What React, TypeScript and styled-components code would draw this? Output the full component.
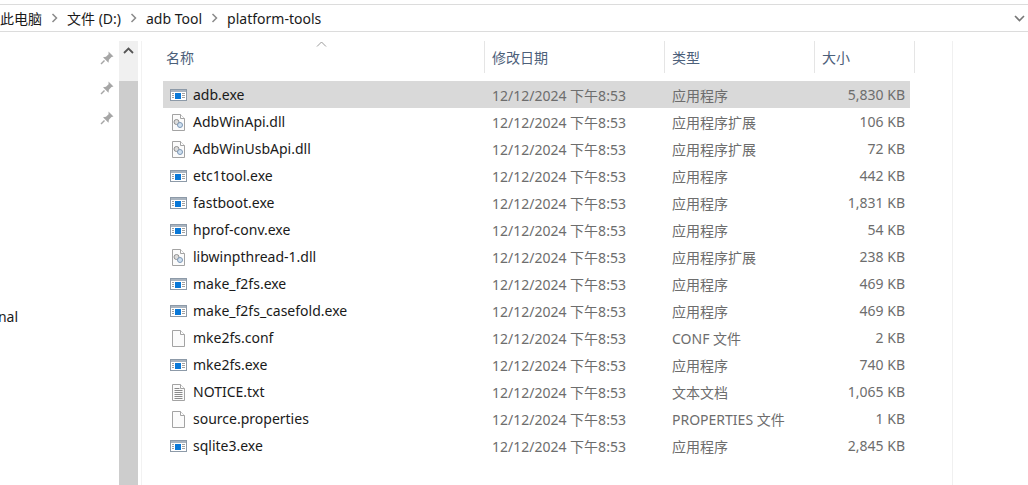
import React, { FC } from "react";
import styled, { createGlobalStyle } from "styled-components";

const GlobalStyle = createGlobalStyle`
  html, body {
    margin: 0;
    padding: 0;
    background: #fff;
    overflow: hidden;
  }
  body {
    font-family: "Noto Sans", "Noto Sans CJK SC", sans-serif;
  }
`;

const Window = styled.div`
  width: 1028px;
  height: 485px;
  display: flex;
  flex-direction: column;
  overflow: hidden;
  background: #fff;
`;

const AddressBar = styled.div`
  height: 26px;
  margin-top: 4px;
  flex: none;
  display: flex;
  align-items: center;
  border-top: 1px solid #dcdcdc;
  border-bottom: 1px solid #dcdcdc;
  font-size: 14px;
  color: #1a1a1a;
`;

const Crumb = styled.span`
  white-space: nowrap;
`;

const CrumbArrow = styled.svg`
  width: 7px;
  height: 10px;
  margin: 0 9px 0 9px;
  flex: none;
`;

const BarChevron = styled.svg`
  width: 11px;
  height: 7px;
  margin-left: auto;
  margin-right: 3px;
`;

const Body = styled.div`
  flex: 1;
  display: flex;
  min-height: 0;
  padding-top: 9px;
`;

const QuickAccess = styled.div`
  width: 119px;
  flex: none;
  position: relative;
  display: flex;
  flex-direction: column;
  align-items: flex-end;
  gap: 14px;
  padding: 9px 4px 0 0;
  box-sizing: border-box;
`;

const PinIcon = styled.svg`
  width: 16px;
  height: 16px;
`;

const CutOffLabel = styled.span`
  position: absolute;
  left: -10px;
  top: 266px;
  font-size: 14px;
  color: #1a1a1a;
  width: 28px;
  text-align: right;
  white-space: nowrap;
`;

const ScrollBar = styled.div`
  width: 19px;
  flex: none;
  display: flex;
  flex-direction: column;
  background: #f0f0f0;
`;

const ScrollUp = styled.div`
  height: 40px;
  display: flex;
  justify-content: center;
  padding-top: 6px;
  box-sizing: border-box;
`;

const ScrollThumb = styled.div`
  flex: 1;
  background: #cdcdcd;
`;

const Pane = styled.div`
  width: 812px;
  flex: none;
  margin-left: 3px;
  padding-left: 21px;
  box-sizing: border-box;
  border-left: 1px solid #f2f2f2;
  border-right: 1px solid #f0f0f0;
  display: flex;
  flex-direction: column;
  position: relative;
`;

const SortCaret = styled.svg`
  position: absolute;
  left: 174px;
  top: 0;
  width: 11px;
  height: 6px;
`;

const HeaderRow = styled.div`
  height: 32px;
  display: grid;
  grid-template-columns: 322px 180px 150px 100px;
  align-items: center;
  margin-bottom: 8px;
`;

const HeaderCell = styled.div`
  height: 100%;
  display: flex;
  align-items: center;
  padding-left: 7px;
  box-sizing: border-box;
  border-right: 1px solid #e5e5e5;
  font-size: 14px;
  color: #4c607a;
  &:first-child {
    padding-left: 3px;
  }
`;

const Rows = styled.div`
  display: flex;
  flex-direction: column;
  width: 747px;
`;

const Row = styled.div<{ $selected?: boolean }>`
  height: 27px;
  display: grid;
  grid-template-columns: 322px 180px 150px 95px;
  align-items: center;
  background: ${(p) => (p.$selected ? "#d9d9d9" : "transparent")};
  font-size: 14px;
  white-space: nowrap;
`;

const NameCell = styled.div`
  display: flex;
  align-items: center;
  gap: 5px;
  padding-left: 6px;
  color: #1a1a1a;
`;

const FileIconBox = styled.svg`
  width: 19px;
  height: 18px;
  flex: none;
`;

const DetailCell = styled.div`
  padding-left: 7px;
  color: #6d6d6d;
`;

const SizeCell = styled.div`
  text-align: right;
  padding-right: 5px;
  color: #6d6d6d;
`;

type Kind = "exe" | "dll" | "blank" | "txt";

const FileIcon: FC<{ kind: Kind }> = ({ kind }) => {
  if (kind === "exe") {
    return (
      <FileIconBox viewBox="0 0 19 18">
        <rect x="1.5" y="3.5" width="16" height="11" fill="#fff" stroke="#8d9aa8" />
        <rect x="2" y="4" width="15" height="2" fill="#aab4bf" />
        <rect x="3" y="7" width="2" height="1" fill="#a0a0a0" />
        <rect x="3" y="9" width="2" height="1" fill="#a0a0a0" />
        <rect x="3" y="11" width="2" height="1" fill="#a0a0a0" />
        <rect x="6" y="7" width="6" height="6" fill="#0a78d7" />
        <rect x="13" y="7" width="3" height="1" fill="#a0a0a0" />
        <rect x="13" y="9" width="3" height="1" fill="#a0a0a0" />
        <rect x="13" y="11" width="3" height="1" fill="#a0a0a0" />
      </FileIconBox>
    );
  }
  return (
    <FileIconBox viewBox="0 0 19 18">
      <path d="M3.5 1.5h8l4 4v12h-12z" fill="#fbfbfb" stroke="#a3a3a3" />
      <path d="M11.5 1.5v4h4" fill="#fff" stroke="#a3a3a3" />
      {kind === "txt" && (
        <path d="M5.5 5.5h5M5.5 7.5h8M5.5 9.5h8M5.5 11.5h8M5.5 13.5h8M5.5 15.5h8" stroke="#8a8a8a" />
      )}
      {kind === "dll" && (
        <>
          <circle cx="7.5" cy="9" r="2.5" fill="#ddd" stroke="#909090" />
          <circle cx="11" cy="12" r="2.5" fill="#cfe0f0" stroke="#7d97b5" />
        </>
      )}
    </FileIconBox>
  );
};

const files: { name: string; kind: Kind; type: string; size: string }[] = [
  { name: "adb.exe", kind: "exe", type: "应用程序", size: "5,830 KB" },
  { name: "AdbWinApi.dll", kind: "dll", type: "应用程序扩展", size: "106 KB" },
  { name: "AdbWinUsbApi.dll", kind: "dll", type: "应用程序扩展", size: "72 KB" },
  { name: "etc1tool.exe", kind: "exe", type: "应用程序", size: "442 KB" },
  { name: "fastboot.exe", kind: "exe", type: "应用程序", size: "1,831 KB" },
  { name: "hprof-conv.exe", kind: "exe", type: "应用程序", size: "54 KB" },
  { name: "libwinpthread-1.dll", kind: "dll", type: "应用程序扩展", size: "238 KB" },
  { name: "make_f2fs.exe", kind: "exe", type: "应用程序", size: "469 KB" },
  { name: "make_f2fs_casefold.exe", kind: "exe", type: "应用程序", size: "469 KB" },
  { name: "mke2fs.conf", kind: "blank", type: "CONF 文件", size: "2 KB" },
  { name: "mke2fs.exe", kind: "exe", type: "应用程序", size: "740 KB" },
  { name: "NOTICE.txt", kind: "txt", type: "文本文档", size: "1,065 KB" },
  { name: "source.properties", kind: "blank", type: "PROPERTIES 文件", size: "1 KB" },
  { name: "sqlite3.exe", kind: "exe", type: "应用程序", size: "2,845 KB" },
];

const crumbs = ["此电脑", "文件 (D:)", "adb Tool", "platform-tools"];

const Pin = () => (
  <PinIcon viewBox="0 0 16 16">
    <path d="M9.5 1.5l5 5-2 .6-2.6 2.6-.4 3-5.5-5.500 3-.4 2.600-2.600z" fill="#a6a6a6" />
    <path d="M5.500 10.500L2 14" stroke="#a6a6a6" strokeWidth="1.500" />
  </PinIcon>
);

export default function App() {
  return (
    <Window>
      <GlobalStyle />
      <AddressBar>
        {crumbs.map((c, i) => (
          <React.Fragment key={c}>
            {i > 0 && (
              <CrumbArrow viewBox="0 0 7 10">
                <path d="M1.500 1l4 4-4 4" fill="none" stroke="#8a8a8a" strokeWidth="1.500" />
              </CrumbArrow>
            )}
            <Crumb>{c}</Crumb>
          </React.Fragment>
        ))}
        <BarChevron viewBox="0 0 11 7">
          <path d="M1 1l4.500 4.500L10 1" fill="none" stroke="#777" strokeWidth="1.600" />
        </BarChevron>
      </AddressBar>
      <Body>
        <QuickAccess>
          <Pin />
          <Pin />
          <Pin />
          <CutOffLabel>nal</CutOffLabel>
        </QuickAccess>
        <ScrollBar>
          <ScrollUp>
            <svg width="11" height="7" viewBox="0 0 11 7">
              <path d="M1 6l4.500-4.500L10 6" fill="none" stroke="#555" strokeWidth="1.800" />
            </svg>
          </ScrollUp>
          <ScrollThumb />
        </ScrollBar>
        <Pane>
          <SortCaret viewBox="0 0 11 6">
            <path d="M1 5.500l4.500-4.500L10 5.500" fill="none" stroke="#9a9a9a" />
          </SortCaret>
          <HeaderRow>
            <HeaderCell>名称</HeaderCell>
            <HeaderCell>修改日期</HeaderCell>
            <HeaderCell>类型</HeaderCell>
            <HeaderCell>大小</HeaderCell>
          </HeaderRow>
          <Rows>
            {files.map((f, i) => (
              <Row key={f.name} $selected={i === 0}>
                <NameCell>
                  <FileIcon kind={f.kind} />
                  {f.name}
                </NameCell>
                <DetailCell>12/12/2024 下午8:53</DetailCell>
                <DetailCell>{f.type}</DetailCell>
                <SizeCell>{f.size}</SizeCell>
              </Row>
            ))}
          </Rows>
        </Pane>
      </Body>
    </Window>
  );
}
